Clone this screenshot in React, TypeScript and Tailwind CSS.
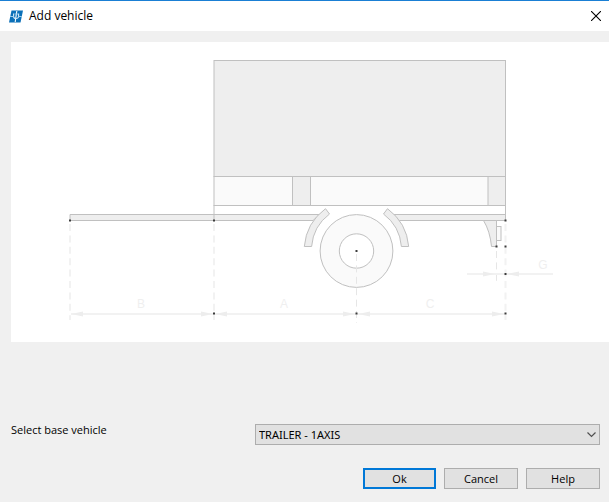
import { useState } from 'react';

type Point = [number, number];

const VEHICLES = ['TRAILER - 1AXIS', 'TRAILER - 2AXIS', 'SEMITRAILER'];

const SNAP_POINTS: Point[] = [
  [70, 220.5],
  [214, 220.5],
  [505.5, 220.5],
  [496.5, 246.5],
  [505.5, 246.5],
  [356.5, 251],
  [505.5, 274],
  [214, 313.5],
  [356.5, 313.5],
  [505.5, 313.5],
];

const LABELS = [
  { text: 'B', x: 141, y: 308 },
  { text: 'A', x: 284, y: 308 },
  { text: 'C', x: 430, y: 308 },
  { text: 'G', x: 543, y: 269 },
];

// Horizontal arrow heads: tip position and the direction it points to
const ARROWS = [
  { x: 71, y: 314, dir: -1 },
  { x: 213, y: 314, dir: 1 },
  { x: 215, y: 314, dir: -1 },
  { x: 355, y: 314, dir: 1 },
  { x: 358, y: 314, dir: -1 },
  { x: 504, y: 314, dir: 1 },
  { x: 495, y: 274, dir: 1 },
  { x: 507, y: 274, dir: -1 },
];

function AppLogo() {
  return (
    <svg viewBox="0 0 14 13" className="h-[13px] w-3.5" aria-hidden="true">
      <path d="M2.5 0.5H14L11.5 12.5H0Z" fill="#0b70b8" />
      <path d="M7.8 1L6.2 12" stroke="#ffffff" strokeWidth="1.1" />
      <path d="M4.6 3.5V6.5Q4.6 8.5 7 8.5T9.6 6.5V3.5" fill="none" stroke="#d6eaf7" strokeWidth="1.1" />
      <path d="M1 6.5H4.5M9.5 6.5H12.8M5.5 4H9" stroke="#9acbea" strokeWidth="1" />
    </svg>
  );
}

function TrailerDrawing() {
  return (
    <svg viewBox="11 42 598 300" className="block h-auto w-full" role="img" aria-label="Trailer with one axis">
      <g fill="none" stroke="#f2f2f2" strokeWidth="2">
        <path d="M70 224V320M214 224V320M505.5 224V320" strokeDasharray="7 4.4" />
        <path d="M356.5 254V323M496.5 251V281" strokeWidth="1" strokeDasharray="7 4.4" stroke="#e6e6e6" />
        <path d="M71 314H505M467 274H553" />
      </g>
      {ARROWS.map(({ x, y, dir }) => (
        <polygon
          key={`${x}-${y}`}
          points={`${x},${y} ${x - 12 * dir},${y - 2.5} ${x - 12 * dir},${y + 2.5}`}
          fill="#ededed"
        />
      ))}

      <g stroke="#c0c0c0" strokeWidth="1">
        <rect x="214" y="60.5" width="291.5" height="116" fill="#eeeeee" />
        <rect x="214" y="176.5" width="291.5" height="29" fill="#fafafa" />
        <rect x="292.5" y="176.5" width="18" height="29" fill="#eeeeee" />
        <rect x="488" y="176.5" width="17.5" height="29" fill="#eeeeee" />
        <path d="M70 214.5H320L313 220.5H70Z" fill="#eeeeee" />
        <path d="M393 214.5H505.5V220.5H399Z" fill="#eeeeee" />
        <path d="M214 205V221M505.5 205V221" />

        <path d="M304.3 246.5A52.4 52.4 0 0 1 325.5 208.7L329.5 214A45 45 0 0 0 311.6 246.5Z" fill="#eeeeee" />
        <path d="M408.7 246.5A52.4 52.4 0 0 0 387.5 208.7L383.5 214A45 45 0 0 1 401.4 246.5Z" fill="#eeeeee" />
        <circle cx="356.5" cy="251" r="36.4" fill="#fafafa" />
        <circle cx="356.5" cy="251" r="17.2" fill="#ffffff" />
        <path d="M356.5 254V288" fill="none" stroke="#e6e6e6" strokeDasharray="7 4.4" />

        <path d="M483.5 220.5Q490 231 491.5 246.5H496.5V220.5Z" fill="#eeeeee" />
        <rect x="496.5" y="226.5" width="4.5" height="14" fill="#fafafa" />
      </g>

      {SNAP_POINTS.map(([x, y]) => (
        <rect key={`${x}-${y}`} x={x - 1} y={y - 1} width="2" height="2" fill="#3c3c3c" />
      ))}

      {LABELS.map(({ text, x, y }) => (
        <text
          key={text}
          x={x}
          y={y}
          textAnchor="middle"
          fill="#efefef"
          className="font-['Liberation_Sans',sans-serif] text-[12px]"
        >
          {text}
        </text>
      ))}
    </svg>
  );
}

export default function App() {
  const [vehicle, setVehicle] = useState(VEHICLES[0]);

  return (
    <div className="flex min-h-screen flex-col border-t border-[#1a7fd4] bg-[#f0f0f0] font-['Open_Sans',sans-serif] text-[11px] text-black">
      <header className="flex h-[30px] items-center justify-between bg-white pr-2 pl-[9px]">
        <div className="flex items-center gap-1.5">
          <AppLogo />
          <h1 className="text-[12px] leading-4">Add vehicle</h1>
        </div>
        <button type="button" aria-label="Close">
          <svg viewBox="0 0 10 10" className="h-2.5 w-2.5" aria-hidden="true">
            <path d="M0 0L10 10M10 0L0 10" stroke="#000000" strokeWidth="1.1" />
          </svg>
        </button>
      </header>

      <main className="pt-[11px] pl-[11px]">
        <div className="bg-white">
          <TrailerDrawing />
        </div>

        <form className="pt-[82px] pr-[9px] pb-3" onSubmit={(event) => event.preventDefault()}>
          <div className="flex items-start">
            <label htmlFor="base-vehicle" className="w-61 shrink-0 leading-3">
              Select base vehicle
            </label>
            <div className="relative flex-1">
              <select
                id="base-vehicle"
                value={vehicle}
                onChange={(event) => setVehicle(event.target.value)}
                className="block h-[21px] w-full appearance-none border border-[#adadad] bg-[#e1e1e1] px-[3px] font-['Noto_Sans',sans-serif] leading-4 outline-none"
              >
                {VEHICLES.map((name) => (
                  <option key={name}>{name}</option>
                ))}
              </select>
              <svg
                viewBox="0 0 9 6"
                className="pointer-events-none absolute top-2 right-1 h-1.5 w-[9px]"
                aria-hidden="true"
              >
                <path d="M0.5 0.5L4.5 4.5L8.5 0.5" fill="none" stroke="#505050" strokeWidth="1.2" />
              </svg>
            </div>
          </div>

          <div className="mt-[23px] flex justify-end gap-2">
            <button type="submit" className="h-[21px] w-[73px] border-2 border-[#0078d7] bg-[#e1e1e1] leading-4">
              Ok
            </button>
            <button type="button" className="h-[21px] w-[74px] border border-[#adadad] bg-[#e1e1e1] leading-4">
              Cancel
            </button>
            <button type="button" className="h-[21px] w-[74px] border border-[#adadad] bg-[#e1e1e1] leading-4">
              Help
            </button>
          </div>
        </form>
      </main>
    </div>
  );
}
